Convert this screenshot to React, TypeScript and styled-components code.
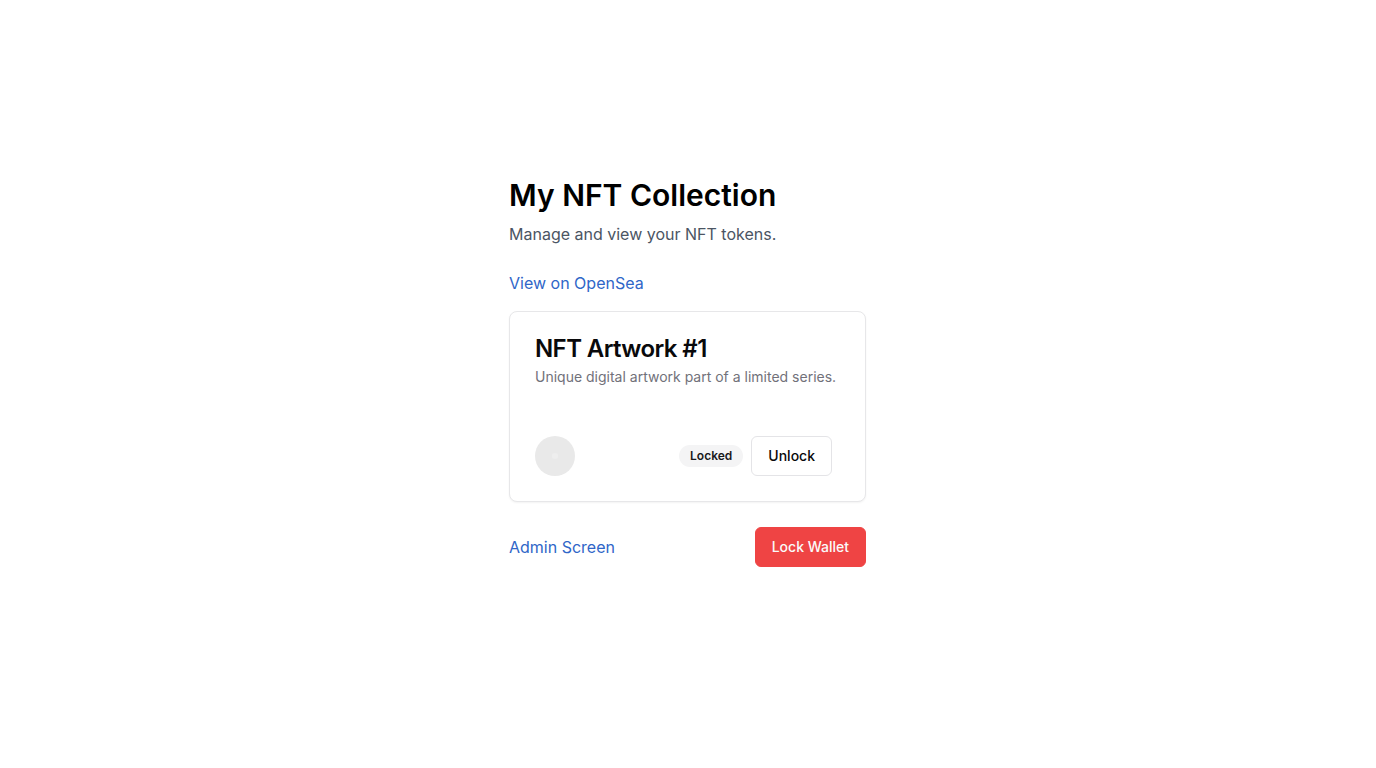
import React from "react";
import styled, { createGlobalStyle } from "styled-components";

const GlobalStyle = createGlobalStyle`
  *, *::before, *::after { box-sizing: border-box; }
  body {
    margin: 0;
    background: #fff;
    color: #000;
    font-family: Inter, "Liberation Sans", sans-serif;
    font-size: 16px;
    line-height: 24px;
  }
  h1, h2, p { margin: 0; }
`;

const Page = styled.main`
  min-height: 100vh;
  display: flex;
  align-items: center;
  justify-content: center;
  padding: 16px 17px 41px 16px;
`;

const Collection = styled.div`
  width: 100%;
  max-width: 357px;
  display: flex;
  flex-direction: column;
`;

const Header = styled.header`
  display: flex;
  flex-direction: column;
  gap: 8px;
  margin-bottom: 25px;
`;

const Title = styled.h1`
  font-size: 30px;
  line-height: 38px;
  font-weight: 600;
`;

const Subtitle = styled.p`
  color: #4b5563;
`;

const TextLink = styled.a`
  align-self: flex-start;
  color: #2f66c8;
  text-decoration: none;
  &:hover { text-decoration: underline; }
`;

const Card = styled.section`
  margin: 16px 0 25px;
  border: 1px solid #e7e7e9;
  border-radius: 8px;
  box-shadow: 0 1px 2px rgba(0, 0, 0, 0.05);
  background: #fff;
`;

const CardHeader = styled.div`
  padding: 24px 25px;
  display: flex;
  flex-direction: column;
  gap: 6px;
`;

const CardTitle = styled.h2`
  font-size: 24px;
  line-height: 25px;
  font-weight: 600;
  letter-spacing: -0.025em;
  color: #09090b;
`;

const CardText = styled.p`
  font-size: 14px;
  line-height: 20px;
  color: #71717a;
`;

const CardBody = styled.div`
  padding: 25px 33px 25px 25px;
  display: flex;
  align-items: center;
  justify-content: space-between;
`;

const Avatar = styled.svg`
  width: 40px;
  height: 40px;
  display: block;
`;

const Actions = styled.div`
  display: flex;
  align-items: center;
  gap: 8px;
`;

const Badge = styled.span`
  padding: 3px 11px;
  border-radius: 999px;
  background: #f4f4f5;
  color: #18181b;
  font-size: 12px;
  line-height: 16px;
  font-weight: 600;
`;

const Button = styled.button<{ $danger?: boolean }>`
  height: 40px;
  padding: 0 16px;
  border-radius: 6px;
  border: 1px solid ${(p) => (p.$danger ? "#ef4444" : "#e4e4e7")};
  background: ${(p) => (p.$danger ? "#ef4444" : "#fff")};
  color: ${(p) => (p.$danger ? "#fafafa" : "#09090b")};
  font: 500 14px/20px Inter, "Liberation Sans", sans-serif;
  cursor: pointer;
`;

const Footer = styled.footer`
  display: flex;
  align-items: center;
  justify-content: space-between;

  ${TextLink} { align-self: center; }
`;

export default function App() {
  return (
    <>
      <GlobalStyle />
      <Page>
        <Collection>
          <Header>
            <Title>My NFT Collection</Title>
            <Subtitle>Manage and view your NFT tokens.</Subtitle>
          </Header>
          <TextLink href="#opensea">View on OpenSea</TextLink>
          <Card>
            <CardHeader>
              <CardTitle>NFT Artwork #1</CardTitle>
              <CardText>Unique digital artwork part of a limited series.</CardText>
            </CardHeader>
            <CardBody>
              <Avatar viewBox="0 0 40 40" role="img" aria-label="NFT artwork">
                <circle cx="20" cy="20" r="20" fill="#e9e9e9" />
                <circle cx="20" cy="20" r="3" fill="#eeeeee" />
              </Avatar>
              <Actions>
                <Badge>Locked</Badge>
                <Button type="button">Unlock</Button>
              </Actions>
            </CardBody>
          </Card>
          <Footer>
            <TextLink href="#admin">Admin Screen</TextLink>
            <Button type="button" $danger>Lock Wallet</Button>
          </Footer>
        </Collection>
      </Page>
    </>
  );
}
